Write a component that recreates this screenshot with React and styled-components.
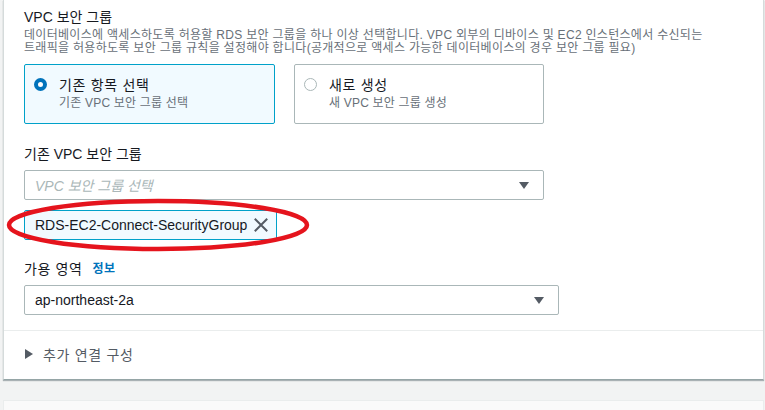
import React from 'react'
import styled, { createGlobalStyle } from 'styled-components'

const GlobalStyle = createGlobalStyle`
  html, body {
    margin: 0;
    padding: 0;
    background: #f2f3f3;
  }
  body {
    font-family: "Liberation Sans", "Noto Sans CJK KR", sans-serif;
    color: #16191f;
  }
`

const CaretDown = () => (
  <svg width="10" height="7" viewBox="0 0 10 7">
    <path d="M0 0 H10 L5 7 Z" fill="#545b64" />
  </svg>
)

const CaretRight = () => (
  <svg width="8" height="10" viewBox="0 0 8 10">
    <path d="M0 0 L8 5 L0 10 Z" fill="#545b64" />
  </svg>
)

const CloseX = () => (
  <svg width="14" height="14" viewBox="0 0 14 14">
    <path d="M1.5 1.5 L12.5 12.5 M12.5 1.5 L1.5 12.5" stroke="#545b64" strokeWidth="2" strokeLinecap="square" />
  </svg>
)

const App = () => {
  return (
    <Page>
      <GlobalStyle />
      <Panel>
        <Body>
          <Title>VPC 보안 그룹</Title>
          <Description>
            데이터베이스에 액세스하도록 허용할 RDS 보안 그룹을 하나 이상 선택합니다. VPC 외부의 디바이스 및 EC2 인스턴스에서 수신되는
            <br />
            트래픽을 허용하도록 보안 그룹 규칙을 설정해야 합니다(공개적으로 액세스 가능한 데이터베이스의 경우 보안 그룹 필요)
          </Description>
          <Tiles>
            <Tile selected>
              <Radio selected />
              <TileText>
                <TileLabel>기존 항목 선택</TileLabel>
                <TileSub>기존 VPC 보안 그룹 선택</TileSub>
              </TileText>
            </Tile>
            <Tile>
              <Radio />
              <TileText>
                <TileLabel>새로 생성</TileLabel>
                <TileSub>새 VPC 보안 그룹 생성</TileSub>
              </TileText>
            </Tile>
          </Tiles>

          <FieldLabel>기존 VPC 보안 그룹</FieldLabel>
          <Select width="520px">
            <Placeholder>VPC 보안 그룹 선택</Placeholder>
            <CaretDown />
          </Select>
          <TokenWrap>
            <Token>
              <TokenText>RDS-EC2-Connect-SecurityGroup</TokenText>
              <CloseX />
            </Token>
            <Annotation width="306" height="54" viewBox="0 0 306 54">
              <ellipse cx="153" cy="27" rx="149" ry="24" fill="none" stroke="#e5141d" strokeWidth="4.5" />
            </Annotation>
          </TokenWrap>

          <FieldLabel spaced>
            <Spaced>가용 영역</Spaced> <InfoLink>정보</InfoLink>
          </FieldLabel>
          <Select width="535px">
            <Value>ap-northeast-2a</Value>
            <CaretDown />
          </Select>
        </Body>
        <Expander>
          <CaretRight />
          <ExpanderText>추가 연결 구성</ExpanderText>
        </Expander>
      </Panel>
      <NextPanel />
    </Page>
  )
}

export default App

const Page = styled.div`
width: 765px;
height: 410px;
overflow: hidden;
padding: 0 1px 0 3px;
box-sizing: border-box;
`

const Panel = styled.div`
background: #ffffff;
border: 1px solid #d5dbdb;
border-top: none;
border-bottom-color: #95a5a6;
box-shadow: 0 1px 1px 0 rgba(0, 28, 36, 0.3);
`

const Body = styled.div`
display: flex;
flex-direction: column;
align-items: flex-start;
padding: 6px 20px 15px;
border-bottom: 1px solid #eaeded;
`

const Title = styled.div`
font-size: 14px;
line-height: 22px;
color: #16191f;
`

const Description = styled.div`
font-size: 12px;
line-height: 13px;
letter-spacing: 0.3px;
color: #687078;
margin-top: 1px;
`

const Tiles = styled.div`
display: grid;
grid-template-columns: 251px 250px;
gap: 19px;
margin-top: 9px;
`

const Tile = styled.div`
display: flex;
align-items: flex-start;
gap: 12px;
height: 60px;
box-sizing: border-box;
padding: 10px 9px;
border: 1px solid ${(p) => (p.selected ? '#00a1c9' : '#aab7b8')};
background: ${(p) => (p.selected ? '#f1faff' : '#ffffff')};
border-radius: 2px;
`

const Radio = styled.span`
flex: none;
width: 13px;
height: 13px;
margin-top: 3px;
box-sizing: border-box;
border-radius: 50%;
border: ${(p) => (p.selected ? '4px solid #0073bb' : '1.5px solid #aab7b8')};
background: #ffffff;
`

const TileText = styled.div`
display: flex;
flex-direction: column;
`

const TileLabel = styled.span`
font-size: 14px;
line-height: 20px;
letter-spacing: 0.7px;
color: #16191f;
`

const TileSub = styled.span`
font-size: 12px;
line-height: 16px;
letter-spacing: 0.2px;
color: #687078;
`

const FieldLabel = styled.div`
font-size: 14px;
line-height: 20px;
color: #16191f;
margin-top: ${(p) => (p.spaced ? '19px' : '20px')};
margin-bottom: 6px;
display: flex;
align-items: center;
gap: 10px;
`

const Spaced = styled.span`
letter-spacing: 0.6px;
`

const InfoLink = styled.span`
font-size: 12px;
font-weight: bold;
letter-spacing: 0.5px;
color: #0073bb;
`

const Select = styled.div`
width: ${(p) => p.width};
height: 30px;
box-sizing: border-box;
border: 1px solid #aab7b8;
border-radius: 2px;
display: flex;
align-items: center;
justify-content: space-between;
padding: 0 14px 0 10px;
background: #ffffff;
`

const Placeholder = styled.span`
font-size: 14px;
font-style: italic;
color: #aab7b8;
`

const Value = styled.span`
font-size: 14px;
color: #16191f;
`

const TokenWrap = styled.div`
position: relative;
margin-top: 10px;
`

const Token = styled.div`
width: 253px;
height: 30px;
box-sizing: border-box;
border: 1px solid #00a1c9;
border-radius: 2px;
background: #f1faff;
display: flex;
align-items: center;
justify-content: space-between;
padding: 0 8px 0 10px;
`

const TokenText = styled.span`
font-size: 14px;
color: #16191f;
`

const Annotation = styled.svg`
position: absolute;
left: -19px;
top: -12px;
pointer-events: none;
`

const Expander = styled.div`
display: flex;
align-items: center;
gap: 10px;
height: 46px;
padding: 0 21px 2px;
`

const ExpanderText = styled.span`
font-size: 14px;
letter-spacing: 0.7px;
color: #545b64;
`

const NextPanel = styled.div`
margin-top: 20px;
height: 40px;
background: #fafafa;
border: 1px solid #eaeded;
`
